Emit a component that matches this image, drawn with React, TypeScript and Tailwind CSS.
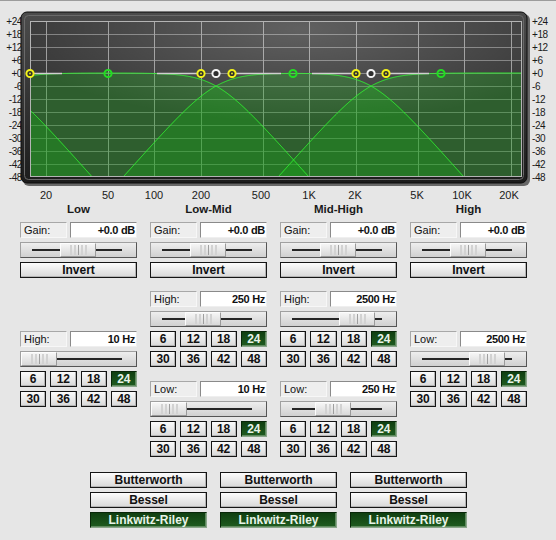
import clsx from "clsx";

const font = '"Liberation Sans", Arial, sans-serif';

// plot area of the response graph, in page pixels
const L = 30;
const R = 522;
const T = 21;
const B = 177;

const fx = (f: number) => 46 + 155 * Math.log10(f / 20);
const xf = (x: number) => 20 * Math.pow(10, (x - 46) / 155);
const yDb = (db: number) => 73 - (db * 13) / 6;
const lp = (f: number, fc: number) => -20 * Math.log10(1 + Math.pow(f / fc, 4));
const hp = (f: number, fc: number) => -20 * Math.log10(1 + Math.pow(fc / f, 4));

const bands: ((f: number) => number)[] = [
  (f) => lp(f, 10),
  (f) => hp(f, 10) + lp(f, 250),
  (f) => hp(f, 250) + lp(f, 2500),
  (f) => hp(f, 2500),
];

function curvePoints(fn: (f: number) => number) {
  const pts: string[] = [];
  for (let x = L; x <= R; x += 0.5) {
    const y = Math.min(yDb(fn(xf(x))), B + 3);
    pts.push(`${x},${y.toFixed(2)}`);
  }
  return pts;
}

const dbs = [24, 18, 12, 6, 0, -6, -12, -18, -24, -30, -36, -42, -48];
const gridFreqs = [20, 50, 100, 200, 500, 1000, 2000, 5000, 10000, 20000];
const freqLabels: [string, number][] = [
  ["20", 46],
  ["50", 108],
  ["100", 154],
  ["200", 201],
  ["500", 261],
  ["1K", 309],
  ["2K", 355],
  ["5K", 417],
  ["10K", 462],
  ["20K", 509],
];
const whiteSegs: [number, number][] = [
  [30, 62],
  [157, 198],
  [235, 281],
  [312, 353],
  [389, 429],
];
const markers: [number, string][] = [
  [30, "y"],
  [108, "g"],
  [201, "y"],
  [216, "w"],
  [232, "y"],
  [293, "g"],
  [356, "y"],
  [371, "w"],
  [386, "y"],
  [441, "g"],
];

function Chart() {
  return (
    <svg width={556} height={200} viewBox="0 1 556 200" className="block" fontFamily={font}>
      <defs>
        <clipPath id="plot">
          <rect x={L} y={T} width={R - L} height={B - T} />
        </clipPath>
        <clipPath id="plotStroke">
          <rect x={L} y={T - 2} width={R - L} height={B - T + 1.5} />
        </clipPath>
        <radialGradient id="glow" cx="0.55" cy="0.05" r="0.6">
          <stop offset="0" stopColor="#ffffff" stopOpacity="0.2" />
          <stop offset="1" stopColor="#ffffff" stopOpacity="0" />
        </radialGradient>
        <linearGradient id="frame" x1="0" y1="0" x2="0" y2="1">
          <stop offset="0" stopColor="#4c4c4c" />
          <stop offset="1" stopColor="#1c1c1c" />
        </linearGradient>
      </defs>

      {dbs.map((d, i) => (
        <g key={d} fontSize={10} fill="#1a1a1a" letterSpacing={-0.4}>
          <text x={22} y={T + 13 * i + 3.5} textAnchor="end">
            {d > 0 ? `+${d}` : d === 0 ? "+0" : d}
          </text>
          <text x={532} y={T + 13 * i + 3.5}>
            {d > 0 ? `+${d}` : d === 0 ? "+0" : d}
          </text>
        </g>
      ))}

      <rect x={23} y={14} width={507} height={172} rx={6} fill="#000" opacity={0.55} />
      <rect x={21} y={12} width={506} height={171} rx={6} fill="url(#frame)" stroke="#0c0c0c" />
      <rect x={24.5} y={15.5} width={499} height={164} rx={4} fill="none" stroke="#6a6a6a" />
      <rect x={L} y={T} width={R - L} height={B - T} fill="#393939" />

      <g clipPath="url(#plot)">
        {dbs.map((d, i) => (
          <line key={d} x1={L} x2={R} y1={T + 13 * i + 0.5} y2={T + 13 * i + 0.5} stroke="#808080" />
        ))}
        {gridFreqs.map((f) => (
          <line key={f} x1={Math.round(fx(f)) + 0.5} x2={Math.round(fx(f)) + 0.5} y1={T} y2={B} stroke="#9c9c9c" />
        ))}
        {bands.map((fn, i) => (
          <path
            key={i}
            d={`M${L},${B + 3} L${curvePoints(fn).join(" L")} L${R},${B + 3} Z`}
            fill="#19aa19"
            fillOpacity={0.33}
          />
        ))}
        <rect x={L} y={T} width={R - L} height={B - T} fill="url(#glow)" />
      </g>

      <g clipPath="url(#plotStroke)">
        {bands.map((fn, i) => (
          <path key={i} d={`M${curvePoints(fn).join(" L")}`} fill="none" stroke="#33f233" strokeWidth={1} />
        ))}
      </g>

      <rect x={L + 0.5} y={T + 0.5} width={R - L - 1} height={B - T - 1} fill="none" stroke="#b4b4b4" />

      {whiteSegs.map(([a, b]) => (
        <line key={a} x1={a} x2={b} y1={73.5} y2={73.5} stroke="#cfcfcf" strokeWidth={1.5} />
      ))}

      {markers.map(([x, c]) => {
        const col = c === "y" ? "#f2f21a" : c === "g" ? "#22dd22" : "#f4f4f4";
        return (
          <g key={x}>
            <circle cx={x} cy={73.5} r={3.6} fill={c === "g" ? "none" : "#2e2e2e"} stroke={col} strokeWidth={2} />
            {c === "y" && <circle cx={x} cy={73.5} r={0.9} fill={col} />}
          </g>
        );
      })}

      {freqLabels.map(([t, x]) => (
        <text key={t} x={x} y={199} textAnchor="middle" fontSize={11} fill="#1a1a1a">
          {t}
        </text>
      ))}
    </svg>
  );
}

function Field({ label, value }: { label: string; value: string }) {
  return (
    <div className="flex h-4 gap-[3px]">
      <div className="flex w-[47px] items-center border border-t-[#a8a8a8] border-l-[#a8a8a8] border-b-[#f7f7f7] border-r-[#f7f7f7] bg-[#eeeeee] pl-[3px] text-[11px] leading-none text-[#111]">
        {label}
      </div>
      <div className="flex flex-1 items-center justify-end border border-t-[#8a8a8a] border-l-[#8a8a8a] border-b-[#efefef] border-r-[#efefef] bg-white pr-[1px] text-[11px] font-bold leading-none tracking-[-0.3px] text-[#111]">
        {value}
      </div>
    </div>
  );
}

function Slider({ pos }: { pos: number }) {
  return (
    <div className="relative h-4 border border-t-[#a0a0a0] border-l-[#a0a0a0] border-b-[#555555] border-r-[#555555] bg-linear-to-b from-[#eeeeee] to-[#d0d0d0]">
      <div className="absolute left-[11px] right-[14px] top-[6px] h-[2px] bg-[#262626]" />
      <div
        className="absolute top-0 bottom-0 flex w-9 justify-center gap-[2px] border border-t-[#fdfdfd] border-l-[#fdfdfd] border-b-[#9a9a9a] border-r-[#9a9a9a] bg-linear-to-b from-[#f6f6f6] to-[#d8d8d8] py-[1px]"
        style={{ left: pos }}
      >
        <div className="w-[2px] bg-[#d2d2d2]" />
        <div className="w-[2px] bg-[#d2d2d2]" />
        <div className="w-[1px] bg-[#9e9e9e]" />
        <div className="w-[2px] bg-[#d2d2d2]" />
        <div className="w-[2px] bg-[#d2d2d2]" />
      </div>
    </div>
  );
}

function Btn({ children, on }: { children: React.ReactNode; on?: boolean }) {
  return (
    <div
      className={clsx(
        "flex h-4 items-center justify-center border text-[12px] font-bold leading-none",
        on
          ? "border-t-[#082608] border-l-[#082608] border-b-[#8aa68a] border-r-[#8aa68a] bg-linear-to-b from-[#0f3f10] to-[#1f5c20] text-[#e8f4e8] shadow-[inset_-1px_-1px_0_#5f8a5f]"
          : "border-[#151515] bg-linear-to-b from-[#fcfcfc] to-[#d8d8d8] text-[#111] shadow-[inset_-1px_-1px_0_#b4b4b4]"
      )}
    >
      {children}
    </div>
  );
}

function Slopes() {
  return (
    <div className="grid grid-cols-4 gap-1">
      {[6, 12, 18, 24, 30, 36, 42, 48].map((n) => (
        <Btn key={n} on={n === 24}>
          {n}
        </Btn>
      ))}
    </div>
  );
}

// thumb offset for a log frequency slider (10 Hz at the far left)
const freqPos = (f: number) => Math.round((Math.log10(f) - 1) * 24.3);

function GainBlock() {
  return (
    <div className="flex flex-col gap-1">
      <Field label="Gain:" value="+0.0 dB" />
      <Slider pos={39} />
      <Btn>Invert</Btn>
    </div>
  );
}

function FreqBlock({ label, hz, className }: { label: string; hz: number; className?: string }) {
  return (
    <div className={clsx("flex flex-col gap-1", className)}>
      <Field label={label} value={`${hz} Hz`} />
      <Slider pos={freqPos(hz)} />
      <Slopes />
    </div>
  );
}

export default function App() {
  return (
    <div
      className="h-[540px] w-[556px] overflow-hidden border-t border-[#9c9c9c] bg-[#e6e6e6]"
      style={{ fontFamily: font }}
    >
      <Chart />

      <div className="grid grid-cols-[repeat(4,117px)] gap-x-[13px] pl-5 text-[11.5px] font-bold leading-[17px] text-[#1a1a1a]">
        <div className="text-center">Low</div>
        <div className="text-center">Low-Mid</div>
        <div className="text-center">Mid-High</div>
        <div className="text-center">High</div>
      </div>

      <div className="mt-1 grid grid-cols-[repeat(4,117px)] items-start gap-x-[13px] pl-5">
        <div className="flex flex-col">
          <GainBlock />
          <FreqBlock label="High:" hz={10} className="mt-[53px]" />
        </div>
        <div className="flex flex-col">
          <GainBlock />
          <FreqBlock label="High:" hz={250} className="mt-[13px]" />
          <FreqBlock label="Low:" hz={10} className="mt-[14px]" />
        </div>
        <div className="flex flex-col">
          <GainBlock />
          <FreqBlock label="High:" hz={2500} className="mt-[13px]" />
          <FreqBlock label="Low:" hz={250} className="mt-[14px]" />
        </div>
        <div className="flex flex-col">
          <GainBlock />
          <FreqBlock label="Low:" hz={2500} className="mt-[53px]" />
        </div>
      </div>

      <div className="mt-[15px] grid grid-cols-[repeat(3,117px)] gap-x-[13px] pl-[90px]">
        {[0, 1, 2].map((i) => (
          <div key={i} className="flex flex-col gap-1">
            <Btn>Butterworth</Btn>
            <Btn>Bessel</Btn>
            <Btn on>Linkwitz-Riley</Btn>
          </div>
        ))}
      </div>
    </div>
  );
}
